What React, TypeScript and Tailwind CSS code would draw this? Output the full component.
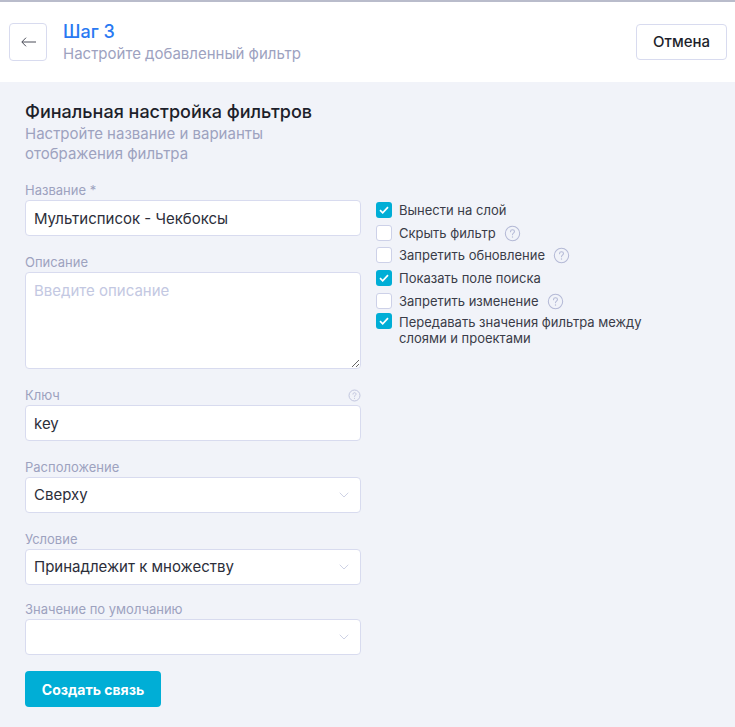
import { ChevronDown } from 'lucide-react';

const font = "font-['Inter','Noto_Sans',sans-serif]";

function Hint({ size = 18 }: { size?: number }) {
  return (
    <svg width={size} height={size} viewBox="0 0 18 18" fill="none" className="shrink-0">
      <circle cx="9" cy="9" r="7.6" stroke="#b4b9d6" strokeWidth="1.1" />
      <path
        d="M6.9 7.1c0-1.2 1-2 2.1-2s2.1.8 2.1 1.9c0 1.6-2.1 1.7-2.1 3.3"
        stroke="#b4b9d6"
        strokeWidth="1.1"
        strokeLinecap="round"
      />
      <circle cx="9" cy="12.7" r="0.7" fill="#b4b9d6" />
    </svg>
  );
}

function Field({ label, hint, className, children }: { label: string; hint?: boolean; className?: string; children: React.ReactNode }) {
  return (
    <div className={className}>
      <div className="flex h-[16px] items-center justify-between text-[13px] leading-[16px] text-[#9da2bf]">
        <span>{label}</span>
        {hint && <Hint size={13} />}
      </div>
      {children}
    </div>
  );
}

function TextBox({ value }: { value: string }) {
  return (
    <div className="mt-[2px] flex h-[36px] items-center rounded-[4px] border border-[#d8dbef] bg-white px-[8px] pt-[2px] text-[15px] text-[#2c2e3a]">
      {value}
    </div>
  );
}

function SelectBox({ value }: { value?: string }) {
  return (
    <div className="mt-[2px] flex h-[36px] items-center justify-between rounded-[4px] border border-[#d8dbef] bg-white pl-[8px] pr-[8px] text-[15px] text-[#2c2e3a]">
      <span>{value}</span>
      <ChevronDown size={16} strokeWidth={1.1} className="text-[#bcc1dc]" />
    </div>
  );
}

const options = [
  { label: 'Вынести на слой', checked: true, rowClass: 'mb-[7px]' },
  { label: 'Скрыть фильтр', hint: true, rowClass: 'mb-[6px]' },
  { label: 'Запретить обновление', hint: true, rowClass: 'mb-[7px]' },
  { label: 'Показать поле поиска', checked: true, rowClass: 'mb-[7px]' },
  { label: 'Запретить изменение', hint: true, rowClass: 'mb-[4px]' },
];

function Box({ checked }: { checked?: boolean }) {
  return checked ? (
    <span className="flex h-[16px] w-[16px] shrink-0 items-center justify-center rounded-[3px] bg-[#00aed6]">
      <svg width="10" height="8" viewBox="0 0 10 8" fill="none">
        <path d="M1 4.2 3.7 6.8 9 1.2" stroke="white" strokeWidth="1.7" />
      </svg>
    </span>
  ) : (
    <span className="h-[16px] w-[16px] shrink-0 rounded-[3px] border border-[#cdd1e8] bg-white" />
  );
}

export default function App() {
  return (
    <div className={`${font} h-[727px] w-[735px] overflow-hidden bg-[#f1f3f9]`}>
      <div className="h-[2px] bg-[#b9bccb]" />
      {/* Header */}
      <div className="flex h-[80px] items-center justify-between bg-white pl-[9px] pr-[8px]">
        <div className="flex items-center">
          <button className="flex h-[38px] w-[38px] items-center justify-center rounded-[4px] border border-[#d8dbef] bg-white">
            <svg width="15" height="10" viewBox="0 0 15 10" fill="none">
              <path d="M15 5H1M5 .7 .8 5 5 9.3" stroke="#4a4c58" strokeWidth="1" />
            </svg>
          </button>
          <div className="ml-[16px] mt-[2px]">
            <div className="text-[18px] leading-[20px] font-medium text-[#2979f2]">Шаг 3</div>
            <div className="mt-[2px] text-[15px] leading-[20px] text-[#9da2bf]">Настройте добавленный фильтр</div>
          </div>
        </div>
        <button className="h-[36px] w-[91px] rounded-[4px] border border-[#d8dbef] bg-white text-[15px] font-medium text-[#1d1f2b]">
          Отмена
        </button>
      </div>

      {/* Form */}
      <div className="flex pl-[25px] pt-[20px]">
        <div className="w-[336px]">
          <div className="text-[18px] leading-[20px] font-medium text-[#1d1f2b]">Финальная настройка фильтров</div>
          <div className="mt-[2px] w-[280px] text-[15px] leading-[20px] text-[#9da2bf]">
            Настройте название и варианты отображения фильтра
          </div>
          <Field label="Название *" className="mt-[18px]">
            <TextBox value="Мультисписок - Чекбоксы" />
          </Field>
          <Field label="Описание" className="mt-[18px]">
            <textarea
              placeholder="Введите описание"
              className="mt-[2px] block h-[97px] w-full rounded-[4px] border border-[#d8dbef] bg-white px-[8px] pt-[8px] pb-[8px] text-[15px] leading-[20px] outline-none placeholder:text-[#c3c8e2]"
            />
          </Field>
          <Field label="Ключ" hint className="mt-[18px]">
            <TextBox value="key" />
          </Field>
          <Field label="Расположение" className="mt-[18px]">
            <SelectBox value="Сверху" />
          </Field>
          <Field label="Условие" className="mt-[18px]">
            <SelectBox value="Принадлежит к множеству" />
          </Field>
          <Field label="Значение по умолчанию" className="mt-[16px]">
            <SelectBox />
          </Field>
          <button className="mt-[16px] h-[36px] w-[136px] rounded-[4px] bg-[#00aed6] text-[14px] font-bold text-white">
            Создать связь
          </button>
        </div>

        {/* Options */}
        <div className="ml-[15px] mt-[100px] w-[280px] text-[13px] text-[#3a3c48]">
          {options.map((o) => (
            <div key={o.label} className={`flex h-[16px] items-center ${o.rowClass}`}>
              <Box checked={o.checked} />
              <span className="ml-[7px] pt-[2px]">{o.label}</span>
              {o.hint && <span className="ml-[8px]"><Hint size={17} /></span>}
            </div>
          ))}
          <div className="flex items-start">
            <Box checked />
            <span className="ml-[7px] pt-[1px] leading-[16px]">Передавать значения фильтра между слоями и проектами</span>
          </div>
        </div>
      </div>
    </div>
  );
}
